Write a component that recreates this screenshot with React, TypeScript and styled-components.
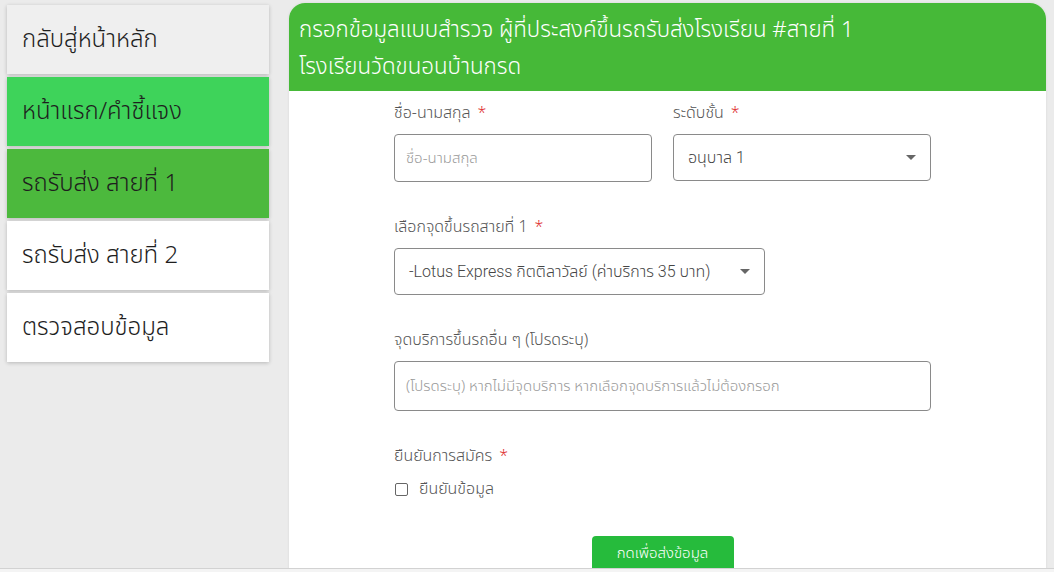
import React from "react";
import styled, { createGlobalStyle } from "styled-components";

const Global = createGlobalStyle`
  html, body { margin: 0; padding: 0; background: #ebebeb; }
  body { font-family: "Noto Sans Thai", "Noto Sans", "DejaVu Sans", sans-serif; }
  * { box-sizing: border-box; }
`;

const Page = styled.div`
  display: flex;
  height: 568px;
  overflow: hidden;
  align-items: flex-start;
`;

const Sidebar = styled.nav`
  width: 262px;
  margin-left: 7px;
  padding-top: 5px;
  display: flex;
  flex-direction: column;
  gap: 3px;
`;

const NavItem = styled.div<{ $bg: string }>`
  height: 69px;
  display: flex;
  align-items: center;
  padding-left: 15px;
  font-size: 24px;
  font-weight: 300;
  color: #1e1e1e;
  background: ${(p) => p.$bg};
  box-shadow: 0 1px 4px rgba(0, 0, 0, 0.22);
`;

const Panel = styled.main`
  margin-left: 20px;
  margin-top: 3px;
  width: 757px;
  height: 600px;
  background: #fff;
  border-radius: 16px 16px 0 0;
  box-shadow: 0 0 3px rgba(0, 0, 0, 0.08);
`;

const Header = styled.header`
  background: #46b938;
  color: #fff;
  border-radius: 16px 16px 0 0;
  padding: 9px 10px 5px;
  font-size: 22.3px;
  font-weight: 300;
  line-height: 37px;
  white-space: nowrap;
`;

const Form = styled.form`
  width: 537px;
  margin-left: 105px;
  padding-top: 10px;
  display: flex;
  flex-direction: column;
`;

const Row = styled.div`
  display: flex;
  gap: 21px;
  margin-bottom: 33px;
`;

const Field = styled.div<{ $w?: string }>`
  display: flex;
  flex-direction: column;
  gap: 9px;
  width: ${(p) => p.$w || "100%"};
`;

const Label = styled.label`
  font-size: 16px;
  font-weight: 300;
  line-height: 24px;
  color: #555;
`;

const Req = styled.span`
  color: #e03030;
  margin-left: 7px;
`;

const Input = styled.input<{ $h?: number }>`
  height: ${(p) => p.$h || 48}px;
  width: 100%;
  border: 1px solid #8a8a8a;
  border-radius: 4px;
  padding: 0 11px;
  font-family: inherit;
  font-weight: 300;
  font-size: 15px;
  color: #444;
  &::placeholder { color: #9a9a9a; }
`;

const SelectBox = styled.div`
  height: 47px;
  width: 100%;
  border: 1px solid #8a8a8a;
  border-radius: 4px;
  padding: 0 14px 0 14px;
  display: flex;
  align-items: center;
  justify-content: space-between;
  font-family: "Roboto", "Noto Sans Thai", sans-serif;
  font-size: 16px;
  font-weight: 350;
  color: #454545;
`;

const Caret = styled.span`
  width: 0;
  height: 0;
  border-left: 5px solid transparent;
  border-right: 5px solid transparent;
  border-top: 5px solid #666;
`;

const CheckRow = styled.label`
  display: flex;
  align-items: center;
  gap: 11px;
  height: 24px;
  font-size: 16px;
  font-weight: 300;
  color: #555;
  margin-top: 9px;
`;

const Box = styled.span`
  width: 13px;
  height: 13px;
  border: 1px solid #666;
  border-radius: 2px;
  margin-left: 1px;
`;

const ButtonWrap = styled.div`
  display: flex;
  justify-content: center;
  margin-top: 35px;
`;

const Submit = styled.button`
  width: 142px;
  height: 40px;
  border: none;
  border-radius: 4px;
  background: #26bb3c;
  color: #fff;
  font-family: inherit;
  font-size: 15px;
  font-weight: 300;
  padding-bottom: 6px;
`;

const BottomStrip = styled.div`
  height: 4px;
  border-top: 1px solid #d2d2d2;
  background: #f4f4f4;
`;

export default function App() {
  return (
    <>
      <Global />
      <Page>
        <Sidebar>
          <NavItem $bg="#efefef">กลับสู่หน้าหลัก</NavItem>
          <NavItem $bg="#3ed35a">หน้าแรก/คำชี้แจง</NavItem>
          <NavItem $bg="#4cb93d">รถรับส่ง สายที่ 1</NavItem>
          <NavItem $bg="#ffffff">รถรับส่ง สายที่ 2</NavItem>
          <NavItem $bg="#ffffff">ตรวจสอบข้อมูล</NavItem>
        </Sidebar>
        <Panel>
          <Header>
            กรอกข้อมูลแบบสำรวจ ผู้ที่ประสงค์ขึ้นรถรับส่งโรงเรียน #สายที่ 1
            <br />
            โรงเรียนวัดขนอนบ้านกรด
          </Header>
          <Form onSubmit={(e) => e.preventDefault()}>
            <Row>
              <Field $w="258px">
                <Label>
                  ชื่อ-นามสกุล<Req>*</Req>
                </Label>
                <Input placeholder="ชื่อ-นามสกุล" />
              </Field>
              <Field $w="258px">
                <Label>
                  ระดับชั้น<Req>*</Req>
                </Label>
                <SelectBox>
                  <span>อนุบาล 1</span>
                  <Caret />
                </SelectBox>
              </Field>
            </Row>
            <Row>
              <Field $w="371px">
                <Label>
                  เลือกจุดขึ้นรถสายที่ 1<Req>*</Req>
                </Label>
                <SelectBox>
                  <span>-Lotus Express กิตติลาวัลย์ (ค่าบริการ 35 บาท)</span>
                  <Caret />
                </SelectBox>
              </Field>
            </Row>
            <Row>
              <Field>
                <Label>จุดบริการขึ้นรถอื่น ๆ (โปรดระบุ)</Label>
                <Input $h={50} placeholder="(โปรดระบุ) หากไม่มีจุดบริการ หากเลือกจุดบริการแล้วไม่ต้องกรอก" />
              </Field>
            </Row>
            <Field>
              <Label>
                ยืนยันการสมัคร<Req>*</Req>
              </Label>
            </Field>
            <CheckRow>
              <Box />
              ยืนยันข้อมูล
            </CheckRow>
            <ButtonWrap>
              <Submit type="submit">กดเพื่อส่งข้อมูล</Submit>
            </ButtonWrap>
          </Form>
        </Panel>
      </Page>
      <BottomStrip />
    </>
  );
}
